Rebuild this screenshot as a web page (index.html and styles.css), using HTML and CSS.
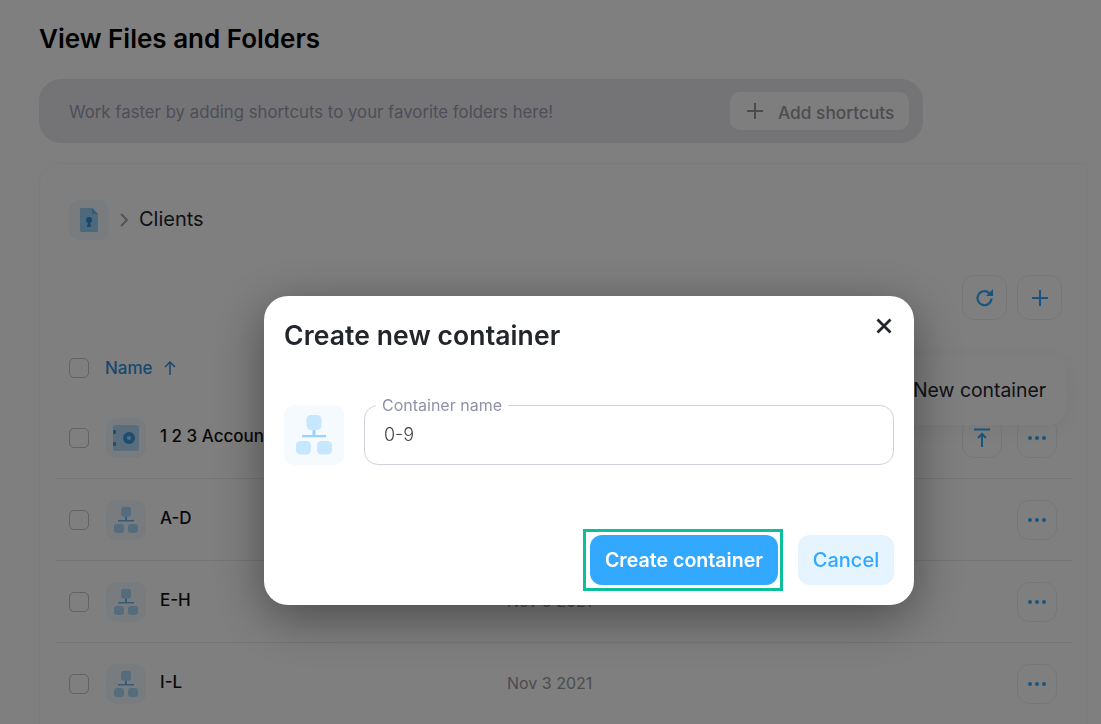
FILE: index.html
```html
<!DOCTYPE html>
<html lang="en">
<head>
  <meta charset="UTF-8" />
  <title>View Files and Folders</title>
  <link rel="stylesheet" href="styles.css">
</head>
<body>
  <svg class="defs" width="0" height="0">
    <symbol id="tree" viewBox="0 0 40 40">
      <rect x="15" y="6.7" width="10" height="10" rx="3" fill="currentColor" opacity=".5"/>
      <rect x="12" y="20" width="16" height="1.5" fill="currentColor"/>
      <rect x="19" y="16.7" width="2" height="3.5" fill="currentColor"/>
      <rect x="8" y="24" width="10" height="9" rx="3" fill="currentColor" opacity=".5"/>
      <rect x="22" y="24" width="10" height="9" rx="3" fill="currentColor" opacity=".5"/>
    </symbol>
    <symbol id="dots" viewBox="0 0 20 6">
      <circle cx="3" cy="3" r="2" fill="currentColor"/>
      <circle cx="10" cy="3" r="2" fill="currentColor"/>
      <circle cx="17" cy="3" r="2" fill="currentColor"/>
    </symbol>
    <symbol id="plus" viewBox="0 0 18 18">
      <path d="M9 1v16M1 9h16" stroke="currentColor" stroke-width="2" fill="none"/>
    </symbol>
  </svg>

  <div class="page">
    <h1>View Files and Folders</h1>

    <div class="shortcuts">
      <span class="shortcuts-text">Work faster by adding shortcuts to your favorite folders here!</span>
      <button class="add-shortcut"><svg class="add-icon"><use href="#plus"/></svg><span class="shortcuts-text">Add shortcuts</span></button>
    </div>

    <div class="card">
      <div class="breadcrumb">
        <div class="tile">
          <svg class="doc-icon" viewBox="0 0 18 24">
            <path d="M1 0h11l6 6v17a1 1 0 0 1-1 1H1a1 1 0 0 1-1-1V1a1 1 0 0 1 1-1z" fill="#66b8f5" opacity=".6"/>
            <path d="M12 0l6 6h-6z" fill="#66b8f5"/>
            <circle cx="9" cy="12" r="3" fill="#2d8fdd"/>
            <path d="M8 14h2l1 5H7z" fill="#2d8fdd"/>
          </svg>
        </div>
        <svg class="chevron" viewBox="0 0 8 14"><path d="M1 1l6 6-6 6" stroke="currentColor" stroke-width="2" fill="none"/></svg>
        <span class="crumb">Clients</span>
      </div>

      <div class="toolbar">
        <button class="tool">
          <svg class="refresh" viewBox="0 0 20 20"><path d="M16.5 10.5a7 7 0 1 1-2.2-5.4" stroke="currentColor" stroke-width="2.2" fill="none"/><path d="M18 1v7h-7z" fill="currentColor"/></svg>
        </button>
        <button class="tool"><svg class="tool-icon"><use href="#plus"/></svg></button>
      </div>

      <div class="head-row">
        <span class="check"></span>
        <span class="sort">Name <svg class="sort-arrow" viewBox="0 0 12 14"><path d="M6 14V1M1 6l5-5 5 5" stroke="currentColor" stroke-width="1.5" fill="none"/></svg></span>
      </div>

      <div class="row">
        <span class="check"></span>
        <div class="tile">
          <svg class="safe-icon" viewBox="0 0 26 26">
            <rect width="26" height="26" rx="2" fill="#66b8f5" opacity=".45"/>
            <circle cx="16" cy="13" r="6" fill="#3d9ae4"/>
            <circle cx="16" cy="13" r="2" fill="#b5d8ee"/>
            <rect y="5" width="3" height="4" rx="1" fill="#3d9ae4"/>
            <rect y="17" width="3" height="4" rx="1" fill="#3d9ae4"/>
          </svg>
        </div>
        <span class="name">1 2 3 Accounting</span>
        <span class="date">Nov 3 2021</span>
        <div class="actions">
          <button class="act">
            <svg class="upload" viewBox="0 0 18 20"><path d="M1 1.5h16M9 19V6M5 10l4-4 4 4" stroke="currentColor" stroke-width="2" fill="none"/></svg>
          </button>
          <button class="act"><svg class="dots"><use href="#dots"/></svg></button>
        </div>
      </div>

      <div class="row">
        <span class="check"></span>
        <div class="tile"><svg class="tree"><use href="#tree"/></svg></div>
        <span class="name">A-D</span>
        <span class="date">Nov 3 2021</span>
        <div class="actions"><button class="act"><svg class="dots"><use href="#dots"/></svg></button></div>
      </div>

      <div class="row">
        <span class="check"></span>
        <div class="tile"><svg class="tree"><use href="#tree"/></svg></div>
        <span class="name">E-H</span>
        <span class="date">Nov 3 2021</span>
        <div class="actions"><button class="act"><svg class="dots"><use href="#dots"/></svg></button></div>
      </div>

      <div class="row row-last">
        <span class="check"></span>
        <div class="tile"><svg class="tree"><use href="#tree"/></svg></div>
        <span class="name">I-L</span>
        <span class="date">Nov 3 2021</span>
        <div class="actions"><button class="act"><svg class="dots"><use href="#dots"/></svg></button></div>
      </div>

      <div class="new-menu">New container</div>
    </div>
  </div>

  <div class="overlay">
    <div class="modal">
      <div class="modal-head">
        <h2>Create new container</h2>
        <svg class="close" viewBox="0 0 16 16"><path d="M1.5 1.5l13 13M14.5 1.5l-13 13" stroke="currentColor" stroke-width="2.8" fill="none"/></svg>
      </div>
      <div class="modal-body">
        <div class="modal-tile"><svg class="modal-tree"><use href="#tree"/></svg></div>
        <fieldset class="field">
          <legend>Container name</legend>
          <span class="field-value">0-9</span>
        </fieldset>
      </div>
      <div class="modal-foot">
        <div class="focus-ring"><button class="btn-primary">Create container</button></div>
        <button class="btn-cancel">Cancel</button>
      </div>
    </div>
  </div>
</body>
</html>
```

FILE: styles.css
```css
* {
  box-sizing: border-box;
}
body {
  margin: 0;
  height: 100vh;
  overflow: hidden;
  background-color: #fff;
  font-family: Inter, "Liberation Sans", sans-serif;
  color: #16181d;
}
.defs {
  position: absolute;
}
button {
  font-family: inherit;
  border: none;
  padding: 0;
  cursor: pointer;
}
.page {
  padding: 22px 14px 0 39px;
}
h1 {
  margin: 0;
  height: 35px;
  font-size: 26px;
  line-height: 33px;
  font-weight: 600;
  color: #000;
}
.shortcuts {
  display: flex;
  align-items: center;
  justify-content: space-between;
  width: 884px;
  height: 64px;
  margin-top: 22px;
  padding: 0 14px 0 30px;
  background-color: #e9e9ed;
  border-radius: 22px;
  font-size: 16.8px;
  color: #9c9cb0;
}
.shortcuts-text {
  margin-top: 2px;
}
.add-shortcut {
  display: flex;
  align-items: center;
  gap: 14px;
  width: 179px;
  height: 38px;
  padding-left: 16px;
  background-color: #fdfdff;
  border-radius: 10px;
  font-size: 17.3px;
  font-weight: 500;
  color: #98989f;
}
.add-icon {
  width: 18px;
  height: 18px;
}
.card {
  position: relative;
  margin-top: 20px;
  padding: 36px 14px 0 15px;
  border: 1px solid #f6f6f8;
  border-bottom: none;
  border-radius: 20px 0 0 0;
}
.breadcrumb {
  display: flex;
  align-items: center;
  padding-left: 14px;
  font-size: 20px;
  color: #22242c;
}
.crumb {
  margin-bottom: 2px;
}
.tile {
  display: flex;
  align-items: center;
  justify-content: center;
  flex: none;
  width: 40px;
  height: 40px;
  background-color: #f0f8ff;
  border-radius: 10px;
  color: #66b8f5;
}
.doc-icon {
  width: 18px;
  height: 24px;
}
.chevron {
  width: 8px;
  height: 14px;
  margin: 0 11px;
  color: #a9a9b8;
}
.toolbar {
  display: flex;
  justify-content: flex-end;
  gap: 10px;
  margin-top: 35px;
  padding-right: 10px;
}
.tool {
  display: flex;
  align-items: center;
  justify-content: center;
  width: 45px;
  height: 45px;
  background: none;
  border: 1px solid #eeeef2;
  border-radius: 12px;
  color: #33a8ff;
}
.tool-icon {
  width: 18px;
  height: 18px;
}
.refresh {
  width: 20px;
  height: 20px;
}
.head-row {
  display: flex;
  align-items: center;
  gap: 16px;
  height: 77px;
  padding: 19px 0 0 14px;
}
.sort {
  display: flex;
  align-items: center;
  gap: 11px;
  font-size: 17px;
  font-weight: 500;
  color: #3390dd;
}
.sort-arrow {
  width: 12px;
  height: 14px;
}
.check {
  flex: none;
  width: 20px;
  height: 20px;
  border: 1.5px solid #c2c2cc;
  border-radius: 5px;
}
.row {
  display: flex;
  align-items: center;
  height: 82px;
  padding: 0 15px 0 14px;
  border-bottom: 1px solid #ececf0;
}
.row .check {
  margin-right: 17px;
}
.row-last {
  height: 81px;
  border-bottom: none;
}
.name {
  width: 347px;
  margin: 0 0 3px 14px;
  font-size: 17px;
  font-weight: 500;
  white-space: nowrap;
  color: #111;
}
.date {
  flex: 1;
  margin-bottom: 2px;
  font-size: 16px;
  color: #98989f;
}
.actions {
  display: flex;
  gap: 15px;
}
.act {
  display: flex;
  align-items: center;
  justify-content: center;
  width: 40px;
  height: 40px;
  background: none;
  border: 1px solid #eeeef2;
  border-radius: 12px;
  color: #33a8ff;
}
.dots {
  width: 20px;
  height: 6px;
}
.upload {
  width: 18px;
  height: 20px;
}
.safe-icon {
  width: 26px;
  height: 26px;
}
.tree {
  width: 40px;
  height: 40px;
}
.new-menu {
  position: absolute;
  top: 191px;
  left: 841px;
  width: 186px;
  height: 70px;
  padding-left: 32px;
  background-color: #fff;
  border-radius: 20px;
  box-shadow: 0 4px 24px rgba(0, 0, 0, 0.06);
  font-size: 19.4px;
  line-height: 71px;
  white-space: nowrap;
  color: #22242c;
}
.overlay {
  position: fixed;
  inset: 0;
  padding: 296px 0 0 264px;
  background-color: rgba(0, 0, 0, 0.5);
}
.modal {
  width: 650px;
  height: 309px;
  padding: 0 20px;
  background-color: #fff;
  border-radius: 24px;
  box-shadow: 0 12px 50px rgba(0, 0, 0, 0.42);
}
.modal-head {
  display: flex;
  justify-content: space-between;
  height: 109px;
}
h2 {
  margin: 0;
  padding-top: 23px;
  font-size: 26.5px;
  line-height: 32px;
  letter-spacing: 0.1px;
  font-weight: 600;
  color: #22252c;
}
.close {
  width: 16px;
  height: 16px;
  margin: 22px 2px 0 0;
  color: #22252c;
}
.modal-body {
  display: flex;
  gap: 20px;
}
.modal-tile {
  flex: none;
  width: 60px;
  height: 60px;
  background-color: #f5faff;
  border-radius: 10px;
}
.modal-tree {
  display: block;
  width: 60px;
  height: 60px;
  color: #99d3ff;
}
.field {
  flex: 1;
  height: 69px;
  margin: -9px 0 0;
  padding: 0 0 0 20px;
  border: 1px solid #cfd2de;
  border-radius: 14px;
}
.field legend {
  margin-left: -9px;
  padding: 0 6px;
  font-size: 16px;
  line-height: 18px;
  color: #8f92a8;
}
.field-value {
  display: block;
  margin: 9px 0 0 -1px;
  font-size: 18px;
  line-height: 24px;
  font-weight: 300;
  color: #444;
}
.modal-foot {
  display: flex;
  justify-content: flex-end;
  align-items: center;
  gap: 15px;
  margin-top: 64px;
}
.focus-ring {
  padding: 3px 2px 3px 4px;
  border: 3px solid #0bbf9a;
  background-color: #fff;
}
.btn-primary {
  display: block;
  width: 188px;
  height: 50px;
  background-color: #33a8ff;
  border-radius: 12px;
  font-size: 19.6px;
  font-weight: 600;
  color: #fff;
}
.btn-cancel {
  width: 96px;
  height: 50px;
  background-color: #e6f4ff;
  border-radius: 12px;
  font-size: 20px;
  font-weight: 500;
  color: #33a8ff;
}
```
